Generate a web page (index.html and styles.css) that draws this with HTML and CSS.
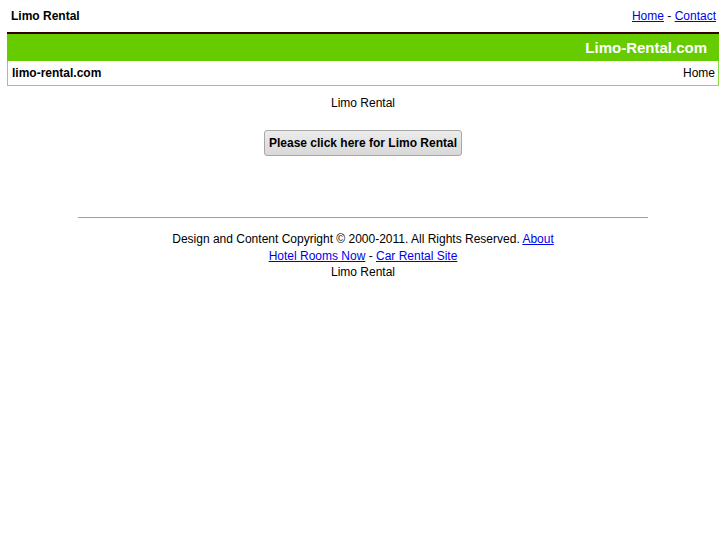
FILE: index.html
```html
<!DOCTYPE html>
<html>
<head>
<meta charset="utf-8">
<title>Limo Rental</title>
<link rel="stylesheet" href="styles.css">
</head>
<body>
<div class="page">
  <div class="topbar">
    <span class="site-title">Limo Rental</span>
    <span class="toplinks"><a href="#">Home</a> - <a href="#">Contact</a></span>
  </div>
  <div class="banner">Limo-Rental.com</div>
  <div class="crumbs">
    <span class="crumb-site">limo-rental.com</span>
    <span class="crumb-home">Home</span>
  </div>
  <div class="main">
    <p class="intro">Limo Rental</p>
    <button class="cta">Please click here for Limo Rental</button>
  </div>
  <hr class="rule">
  <div class="footer">
    <div>Design and Content Copyright © 2000-2011. All Rights Reserved. <a href="#">About</a></div>
    <div><a href="#">Hotel Rooms Now</a> - <a href="#">Car Rental Site</a></div>
    <div>Limo Rental</div>
  </div>
</div>
</body>
</html>
```
FILE: styles.css
```css
html, body {
  margin: 0;
  padding: 0;
  background: #fff;
}
body {
  font-family: "Liberation Sans", Arial, sans-serif;
  font-size: 12px;
  color: #000;
}
a {
  color: #0000ee;
}
.page {
  padding: 0 8px 0 7px;
}
.topbar {
  display: flex;
  justify-content: space-between;
  align-items: center;
  height: 32px;
  padding: 0 3px 0 4px;
}
.site-title {
  font-weight: bold;
}
.banner {
  border-top: 2px solid #330000;
  background: #66cc00;
  color: #fff;
  font-size: 15px;
  font-weight: bold;
  height: 27px;
  line-height: 27px;
  text-align: right;
  padding-right: 12px;
}
.crumbs {
  display: flex;
  justify-content: space-between;
  align-items: center;
  height: 24px;
  border: 1px solid #88dd44;
  border-top: none;
  padding: 0 3px 0 4px;
}
.crumb-site {
  font-weight: bold;
}
.main {
  display: flex;
  flex-direction: column;
  align-items: center;
}
.intro {
  margin: 9px 0 0;
  line-height: 16px;
}
.cta {
  margin-top: 19px;
  font-family: "Liberation Sans", Arial, sans-serif;
  font-size: 12px;
  font-weight: bold;
  color: #000;
  height: 26px;
  padding: 0 4px;
  border: 1px solid #a8a8a8;
  border-radius: 3px;
  background: linear-gradient(#ececec, #d8d8d8);
}
.rule {
  width: 80%;
  margin: 61px auto 0;
  border: none;
  border-top: 1px solid #a0a0a0;
  height: 0;
}
.footer {
  text-align: center;
  margin-top: 13px;
  line-height: 16.5px;
}
```
